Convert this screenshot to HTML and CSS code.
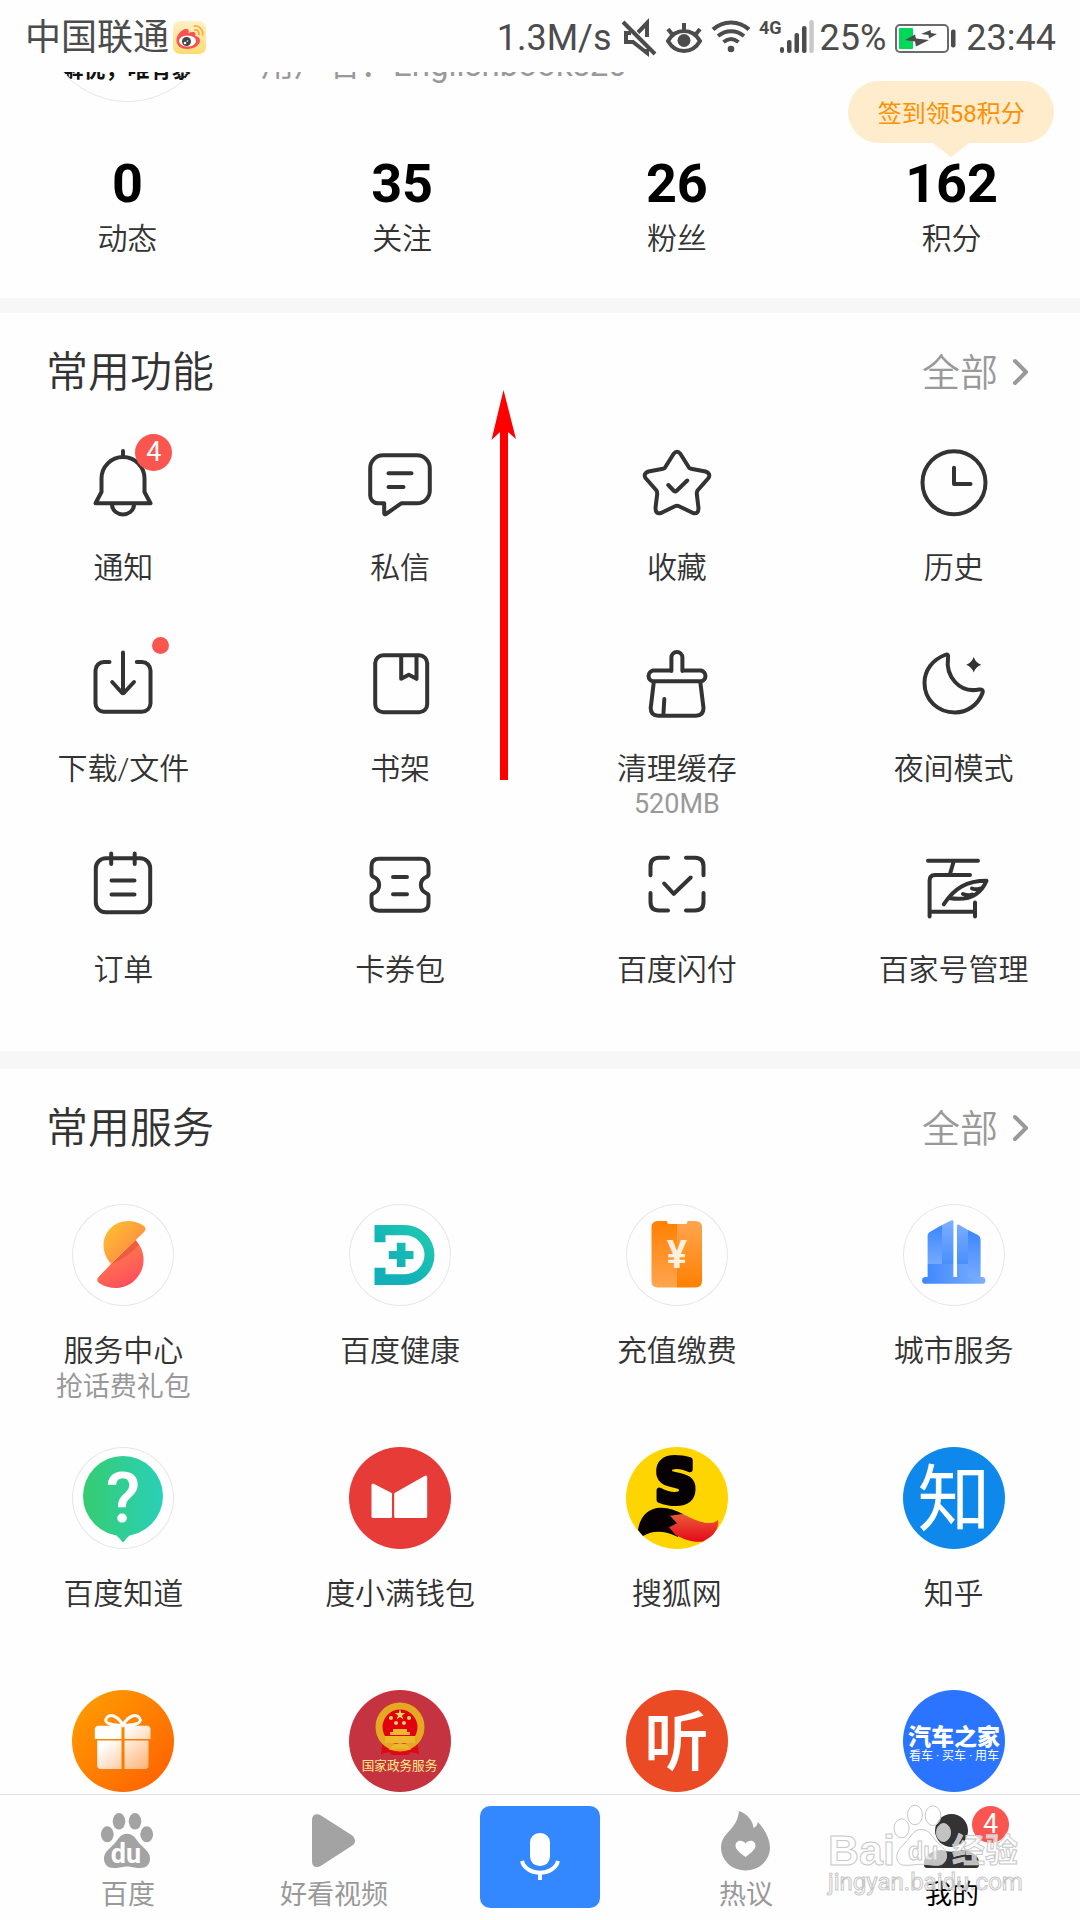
FILE: index.html
```html
<!DOCTYPE html>
<html lang="zh-CN">
<head>
<meta charset="utf-8">
<meta name="viewport" content="width=device-width">
<title>我的</title>
<link rel="stylesheet" href="styles.css">
</head>
<body>
<div class="app">
  <header class="status">
    <div class="status-side">
      <span>中国联通</span>
      <svg class="weibo" width="33" height="33" viewBox="0 0 33 33" aria-hidden="true">
        <defs><linearGradient id="wb" x1="0" y1="0" x2="0" y2="1"><stop offset="0" stop-color="#fff1c8"/><stop offset="1" stop-color="#ffdb70"/></linearGradient></defs>
        <rect width="33" height="33" rx="7" fill="url(#wb)"/>
        <path d="M3.500 20C3 14 9 8 13 8c3 0 3 2 2.500 4 3-1.500 7-1.500 7 1 0 1-.5 2-.5 2 3 .5 5 2 5 4.500C27 24 21 28 14.500 28S4 25 3.500 20z" fill="#fa5151"/>
        <ellipse cx="14.500" cy="20" rx="8.500" ry="5.500" fill="#fff"/>
        <circle cx="13.500" cy="20.500" r="4.500" fill="#444"/><circle cx="12" cy="22" r="1.300" fill="#fff"/><circle cx="14.500" cy="20" r=".8" fill="#fff"/>
        <path d="M21.500 5c5-.5 9 4 8 9M22 9c3-.3 4.500 2 4 4.500" fill="none" stroke="#ffab45" stroke-width="1.800" stroke-linecap="round"/>
      </svg>
    </div>
    <div class="status-side status-right">
      <span>1.3M/s</span>
      <svg width="43" height="40" viewBox="-3 0 43 40" class="line-dark" aria-hidden="true">
        <path d="M4 5 36 37M28 20V6l-9 9.500M12 16H7v9h7l14 11v-4"/>
      </svg>
      <svg width="42" height="40" viewBox="0 0 42 40" class="line-dark" aria-hidden="true">
        <path d="M5 24C9 17 15 14 21 14s12 3 16 10c-4 7-10 10-16 10S9 31 5 24zM21 6v7M5 12l4 5M37 12l-4 5"/>
        <circle cx="21" cy="23.500" r="6.500" fill="#4c4c4c" stroke="none"/>
      </svg>
      <svg width="44" height="40" viewBox="0 0 44 40" class="line-dark" aria-hidden="true">
        <path d="M4 12.500C14 3 30 3 40 12.500M9 19c8-6.500 18-6.500 26 0M14.500 25c5-4 10-4 15 0"/>
        <circle cx="22" cy="32" r="3.300" fill="#4c4c4c" stroke="none"/>
      </svg>
      <svg width="59" height="40" viewBox="-1 0 59 40" aria-hidden="true">
        <text x="1" y="17" font-size="18" font-weight="700" fill="#4c4c4c">4G</text>
        <g fill="#4c4c4c"><rect x="22" y="30" width="4" height="6" rx="2"/><rect x="29" y="23" width="4.500" height="13" rx="2"/><rect x="36.500" y="16" width="4.500" height="20" rx="2"/><rect x="44" y="9" width="4.500" height="27" rx="2"/></g>
        <rect x="51.300" y="3" width="4.500" height="33" rx="2" fill="#c9c9c9"/>
      </svg>
      <span>25%</span>
      <svg width="72" height="40" viewBox="2 0 72 40" aria-hidden="true">
        <rect x="8" y="8" width="52" height="27" rx="4" fill="#fff" stroke="#6a6a6a" stroke-width="2"/>
        <rect x="11" y="11" width="14" height="21" rx="1" fill="#00d858"/>
        <rect x="63" y="12.500" width="4.500" height="18" rx="2" fill="#4c4c4c"/>
        <path d="M17 23l10-5.500 1 4 13 1.500-13 6.500-1-5zM33 17l9.500-4 .5 3 6 1-8 4.500-.5-3.500z" fill="#4c4c4c"/>
      </svg>
      <span>23:44</span>
    </div>
  </header>

  <main class="content">
    <section class="profile">
      <div class="avatar"><span>解忧，唯有暴富</span></div>
      <p class="username">用户名：Englishbooks20</p>
    </section>

    <section class="stats">
      <a href="#"><b>0</b><span>动态</span></a>
      <a href="#"><b>35</b><span>关注</span></a>
      <a href="#"><b>26</b><span>粉丝</span></a>
      <a href="#"><b>162</b><span>积分</span><em class="bubble">签到领58积分</em></a>
    </section>

    <section class="panel functions">
      <div class="panel-head">
        <h2>常用功能</h2>
        <a href="#">全部<svg width="18" height="28" viewBox="0 0 18 28" aria-hidden="true"><path d="M3 3l11 11L3 25"/></svg></a>
      </div>
      <div class="grid">
        <a href="#" class="cell"><span class="icon">
          <svg viewBox="0 0 70 70"><path d="M35 3v5M13.500 44V30.500a21.500 21.500 0 0 1 43 0V44l6 11.300H7.500zM24 57c1 12.500 21 12.500 22 0"/></svg>
          <i class="badge">4</i></span><span class="label">通知</span></a>
        <a href="#" class="cell"><span class="icon">
          <svg viewBox="0 0 70 70"><path d="M18 7.300H52a12.800 12.800 0 0 1 12.800 12.800V42.500A12.800 12.800 0 0 1 52 55.300H36.200L21 66q-1.800 1-1.800-1v-9.700H13a7.800 7.800 0 0 1-7.800-7.800V20.100A12.800 12.800 0 0 1 18 7.300zM23.500 25.300h23M23.500 39h15"/></svg>
          </span><span class="label">私信</span></a>
        <a href="#" class="cell"><span class="icon">
          <svg viewBox="0 0 70 70"><path d="M31.500 6Q35 1.500 38.500 6L46.800 19.300Q47.600 20.500 49 20.700L63.500 23.500Q69 25.500 66.500 30L55.500 42.500Q54.700 44 54.800 46L56.500 60Q56.500 66.500 51 65L37 58.200Q35 57.300 33 58.200L19 65Q13.500 66.500 13.500 60L15.200 46Q15.300 44 14.500 42.500L3.500 30Q1 25.500 6.500 23.500L21 20.700Q22.400 20.500 23.200 19.300ZM26.300 37l5.700 6q1.200 1 2.400 0L45.200 32.500"/></svg>
          </span><span class="label">收藏</span></a>
        <a href="#" class="cell"><span class="icon">
          <svg viewBox="0 0 70 70"><circle cx="35" cy="34.700" r="31.500"/><path d="M35 19.700V36H51.500"/></svg>
          </span><span class="label">历史</span></a>

        <a href="#" class="cell"><span class="icon">
          <svg viewBox="0 0 70 70"><path d="M21.500 13H16a8.500 8.500 0 0 0-8.500 8.500v33A8.300 8.300 0 0 0 16 62.700H54a8.500 8.500 0 0 0 8.500-8.200v-33A8.500 8.500 0 0 0 54 13H48.800M35 3.500V44M24.200 33l9.500 10.500q1.300 1.200 2.600 0L46 33"/></svg>
          <i class="dot"></i></span><span class="label">下载/文件</span></a>
        <a href="#" class="cell"><span class="icon">
          <svg viewBox="0 0 70 70"><rect x="10.200" y="6.300" width="52" height="57" rx="8"/><path d="M36.200 7v22.800l7.600-4 7.700 4V7"/></svg>
          </span><span class="label">书架</span></a>
        <a href="#" class="cell"><span class="icon">
          <svg viewBox="0 0 70 70"><path d="M29.400 21.500H11A5.500 5.500 0 0 0 11 32.300H59A5.500 5.500 0 0 0 59 21.500H40.500M29.400 22V8.500a5.500 5.500 0 0 1 11 0V22M11.800 33L8.700 59q0 7.700 7.500 7.700H54q7.500 0 7.500-7.700L58.300 33M22.300 50l-.8 14"/></svg>
          </span><span class="label">清理缓存</span><small>520MB</small></a>
        <a href="#" class="cell"><span class="icon">
          <svg viewBox="0 0 70 70"><path d="M26 6Q30 4.500 29 9C26.500 27 40 44.500 60 40.500Q65 40 63.500 44C59 56 48 63.500 36 63.500C19 63.500 5.500 51 5.500 34C5.500 21 14 10.500 26 6Z"/><path d="M54.700 8q2 5.700 7.500 7.700-5.500 2-7.500 7.700-2-5.700-7.500-7.700 5.500-2 7.500-7.700z" fill="#333" stroke="none"/></svg>
          </span><span class="label">夜间模式</span></a>

        <a href="#" class="cell"><span class="icon">
          <svg viewBox="0 0 70 70"><rect x="7.800" y="8.300" width="54.400" height="54" rx="10"/><path d="M23.200 3.500V14M46.700 3.500V14M23.500 30.500H46.500M23.500 44.500H46.500"/></svg>
          </span><span class="label">订单</span></a>
        <a href="#" class="cell"><span class="icon">
          <svg viewBox="0 0 70 70"><path d="M14 8.700H56q7.500 0 7.500 7.500V24q0 2-2 2.800c-7.500 3-7.500 13.500 0 16.500q2 .8 2 2.700v7.300q0 7.400-7.500 7.400H14q-7.500 0-7.500-7.400V46q0-2 2-2.700c7.500-3 7.500-13.500 0-16.500q-2-.8-2-2.800V16.200q0-7.500 7.500-7.500zM28 27h14M28 44.300h14"/></svg>
          </span><span class="label">卡券包</span></a>
        <a href="#" class="cell"><span class="icon">
          <svg viewBox="0 0 70 70"><path d="M26 7.700H17q-8.500 0-8.500 8.500v9M44 7.700h9q8.500 0 8.500 8.500v9M26 60.500H17q-8.500 0-8.500-8.500V43M44 60.500h9q8.500 0 8.500-8.500V43M22.200 33.500l9.600 10.300L48.700 27.500"/></svg>
          </span><span class="label">百度闪付</span></a>
        <a href="#" class="cell"><span class="icon">
          <svg viewBox="0 0 70 70"><path d="M9 10.700H59M34.500 12L31 24M51 25H16q-5.400 0-5.400 5.500V66.500M10.600 61.700H56M56 52.500V66.500M24.800 54.300C35 38 48 30.700 67.500 30.700C61 46 48 51 30.500 48M44 44q5 2 9 .5M53 38.500q4 1.500 8 0"/></svg>
          </span><span class="label">百家号管理</span></a>
      </div>
    </section>

    <section class="panel services">
      <div class="panel-head">
        <h2>常用服务</h2>
        <a href="#">全部<svg width="18" height="28" viewBox="0 0 18 28" aria-hidden="true"><path d="M3 3l11 11L3 25"/></svg></a>
      </div>
      <div class="grid">
        <a href="#" class="cell"><svg class="logo ring" viewBox="0 0 102 102">
          <defs>
            <linearGradient id="sa" x1="0" y1="0" x2="1" y2="1"><stop offset="0" stop-color="#ffc62e"/><stop offset="1" stop-color="#ff7a4a"/></linearGradient>
            <linearGradient id="sb" x1=".2" y1="0" x2=".7" y2="1"><stop offset="0" stop-color="#ff8a45"/><stop offset="1" stop-color="#ff4a5e"/></linearGradient>
          </defs>
          <path d="M63.500 36C75 48 74 66 62 77C52 86 38 86 27 79Q23.500 76 27 72.500L39 60Z" fill="url(#sb)"/>
          <path d="M63.500 36L39 60q16-6 28-19z" fill="#d9402f" opacity=".45"/>
          <path d="M39 60C27 46 30 28 44 20C54 15 64 17 72 22Q75 25 72 28Z" fill="url(#sa)"/></svg>
          <span class="label">服务中心</span><small>抢话费礼包</small></a>
        <a href="#" class="cell"><svg class="logo ring" viewBox="0 0 102 102">
          <defs><linearGradient id="dh" x1="0" y1="1" x2="1" y2="0"><stop offset=".3" stop-color="#12b0b8"/><stop offset="1" stop-color="#22cdb0"/></linearGradient></defs>
          <path d="M25.500 21H55.500a30 30 0 0 1 0 60H25.500V63.700H36.500V70.300H56a19.500 19.500 0 0 0 0-39H36.500V38.300H25.500ZM47.800 38.700h8.700V47h8v8h-8v8h-8.700v-8h-8v-8h8z" fill="url(#dh)"/></svg>
          <span class="label">百度健康</span></a>
        <a href="#" class="cell"><svg class="logo ring" viewBox="0 0 102 102">
          <defs><linearGradient id="ra" x1="0" y1="0" x2="0" y2="1"><stop offset="0" stop-color="#ff8000"/><stop offset="1" stop-color="#ffa550"/></linearGradient>
          <linearGradient id="rb" x1="0" y1="0" x2="0" y2="1"><stop offset="0" stop-color="#ffa550"/><stop offset="1" stop-color="#ff8000"/></linearGradient></defs>
          <path d="M51 20H43q-2 0-2-3H32q-6.500 0-6.500 6.500v53.500q0 6.500 6.500 6.500H51z" fill="url(#ra)"/>
          <path d="M51 20h8.500q2 0 2-3H69.500q6.500 0 6.500 6.500v53.500q0 6.500-6.500 6.500H51z" fill="url(#rb)"/>
          <text x="51" y="64" font-size="38" font-weight="700" text-anchor="middle" fill="#fff0df">¥</text></svg>
          <span class="label">充值缴费</span></a>
        <a href="#" class="cell"><svg class="logo ring" viewBox="0 0 102 102">
          <defs><linearGradient id="ca" x1="0" y1="0" x2="0" y2="1"><stop offset="0" stop-color="#3c86ff"/><stop offset="1" stop-color="#74aaff"/></linearGradient>
          <linearGradient id="cb" x1="0" y1="0" x2="0" y2="1"><stop offset="0" stop-color="#7db0ff"/><stop offset="1" stop-color="#4a8eff"/></linearGradient>
          <linearGradient id="cc" x1="0" y1="0" x2="1" y2="0"><stop offset="0" stop-color="#3c86ff"/><stop offset="1" stop-color="#7db0ff"/></linearGradient></defs>
          <path d="M24.600 60V32q0-3 3-4.500L39 21v39z" fill="url(#ca)"/><path d="M39 60V21l9-4.500q2.400-1 2.400 1V60zM54 60V22q0-2 2-1.200L65 26v34z" fill="url(#cb)"/>
          <path d="M65 73V26l10 5q2.600 1.500 2.600 4.500V73z" fill="url(#ca)"/>
          <path d="M24.600 60H50.400V73H54V60H65V73H79a3.400 3.400 0 0 1 0 6.800H22.500a3.400 3.400 0 0 1 0-6.800h2.100z" fill="url(#cc)"/></svg>
          <span class="label">城市服务</span></a>

        <a href="#" class="cell"><svg class="logo ring" viewBox="0 0 102 102">
          <defs><linearGradient id="zd"><stop offset="0" stop-color="#35cc70"/><stop offset="1" stop-color="#2ad0b8"/></linearGradient></defs>
          <circle cx="51" cy="49" r="40" fill="url(#zd)"/><path d="M42 87q3 1 8 7.500 1 1.200 2 0 5-6.500 8-7.500z" fill="#2fce94"/>
          <text x="51" y="75" font-size="71" font-weight="500" text-anchor="middle" fill="#fff">?</text></svg>
          <span class="label">百度知道</span></a>
        <a href="#" class="cell"><svg class="logo" viewBox="0 0 102 102">
          <circle cx="51" cy="51" r="51" fill="#e73b38"/>
          <path d="M24 38l17.500 9V69.500H24zM46.700 47l30-17V69.500h-30z" fill="#fff" stroke="#fff" stroke-width="3" stroke-linejoin="round"/></svg>
          <span class="label">度小满钱包</span></a>
        <a href="#" class="cell"><svg class="logo" viewBox="0 0 102 102">
          <defs><linearGradient id="sh" x1="0" y1="0" x2="0" y2="1"><stop offset="0" stop-color="#ea5b38"/><stop offset="1" stop-color="#e5091a"/></linearGradient></defs>
          <circle cx="51" cy="51" r="51" fill="#ffd500"/>
          <text x="50" y="55" class="sohu" text-anchor="middle">S</text>
          <path d="M12 83C14 68 24 60 36 60.700Q46 61 57 67L52 90Q32 80 17 89z" fill="#060003"/>
          <path d="M57 67C70 74 84 80 92 73q1.500 9-7 16.500l-8 5C66 96 58 92 49.500 88L43 80.300l8-4-7-7.500z" fill="url(#sh)"/></svg>
          <span class="label">搜狐网</span></a>
        <a href="#" class="cell"><svg class="logo" viewBox="0 0 102 102">
          <circle cx="51" cy="51" r="51" fill="#0f88eb"/>
          <text x="51" y="78" font-size="73" text-anchor="middle" fill="#fff">知</text></svg>
          <span class="label">知乎</span></a>

        <a href="#" class="cell"><svg class="logo" viewBox="0 0 102 102">
          <defs><linearGradient id="ga" x1="0" y1="0" x2="1" y2="1"><stop offset=".1" stop-color="#ff9a00"/><stop offset=".9" stop-color="#ff6400"/></linearGradient>
          <linearGradient id="gb" x1="0" y1="0" x2="1" y2="1"><stop offset=".3" stop-color="#fff"/><stop offset="1" stop-color="#ffb070"/></linearGradient></defs>
          <circle cx="51" cy="51" r="51" fill="url(#ga)"/>
          <path d="M25 35.700H49.500V49H22.800V38zM52.500 35.700H76.500l2 2.300V49h-26zM25.200 50.500H49.500V79H27.500l-2.300-2zM52.500 50.500h24V77l-2 2h-22z" fill="url(#gb)"/>
          <path d="M51 35C46 26 38 23 34.500 28S40 36 51 35C62 36 71 33 67.500 28S56 26 51 35z" fill="none" stroke="#fff" stroke-width="3"/></svg></a>
        <a href="#" class="cell"><svg class="logo" viewBox="0 0 102 102">
          <circle cx="51" cy="51" r="51" fill="#c53340"/>
          <path d="M34 49L32 64l8-2 3 3h16l3-3 8 2-2-15z" fill="#dd0a16"/>
          <circle cx="51" cy="37" r="21" fill="#e0000f" stroke="#e5a823" stroke-width="7"/>
          <path d="M36 46h30v7H36zM41 42h20v3H41zM44 39h14v3H44zM43 56q8-6 16 0l3 4q-11-3-22 0z" fill="#efb730"/>
          <path d="M51 19l1.300 4h4l-3.300 2.400 1.300 4-3.300-2.500-3.300 2.500 1.300-4-3.300-2.400h4z" fill="#f7d35a"/>
          <g fill="#f7d35a"><circle cx="42" cy="28" r="2"/><circle cx="60" cy="28" r="2"/><circle cx="47" cy="33" r="2"/><circle cx="55" cy="33" r="2"/></g>
          <text x="50.500" y="80" font-size="12.600" text-anchor="middle" fill="#fdec82">国家政务服务</text></svg></a>
        <a href="#" class="cell"><svg class="logo" viewBox="0 0 102 102">
          <circle cx="51" cy="51" r="51" fill="#eb4b24"/>
          <text x="50.500" y="75" font-size="65" font-weight="500" text-anchor="middle" fill="#fff">听</text></svg></a>
        <a href="#" class="cell"><svg class="logo" viewBox="0 0 102 102">
          <circle cx="51" cy="51" r="51" fill="#2a74ff"/>
          <text x="51" y="54.500" font-size="23" font-weight="900" text-anchor="middle" fill="#fff">汽车之家</text>
          <text x="51" y="69.500" font-size="12" text-anchor="middle" fill="#fff">看车 · 买车 · 用车</text></svg></a>
      </div>
    </section>
  </main>

  <nav class="tabs">
    <a href="#" class="tab"><span class="tab-icon"><svg viewBox="0 0 56 56">
      <g fill="#a3a3a3"><ellipse cx="7.300" cy="22.300" rx="6.400" ry="8"/><ellipse cx="19" cy="9.300" rx="6.300" ry="8.300"/><ellipse cx="35" cy="9.300" rx="6.300" ry="8.300"/><ellipse cx="46.700" cy="22.300" rx="6.400" ry="8"/>
      <path d="M27 21.700C34 21.700 36 28 41 33C46 38 50 41 50 46.500C50 53 46 56 40 56C34 56 31 54.500 27 54.500S20 56 14 56C8 56 4 53 4 46.500C4 41 8 38 13 33C18 28 20 21.700 27 21.700Z"/></g>
      <text x="26" y="50.500" font-size="27" font-weight="700" text-anchor="middle" fill="#fff">du</text></svg></span>百度</a>
    <a href="#" class="tab"><span class="tab-icon"><svg viewBox="0 0 56 56"><path d="M6 8Q6 2.300 11 2.300q2 0 4 1.300L45.500 23Q49 25.500 49 28.700T45.500 34L15 53.700Q13 55 11 55 6 55 6 49z" fill="#a3a3a3"/></svg></span>好看视频</a>
    <button type="button" class="mic" aria-label="语音搜索"><svg width="44" height="52" viewBox="0 0 44 52"><rect x="12" y="2" width="20" height="33" rx="9.500" fill="#fff"/><path d="M4 30C8 45.500 36 45.500 40 30M22 41v8" fill="none" stroke="#fff" stroke-width="4"/></svg></button>
    <a href="#" class="tab"><span class="tab-icon"><svg viewBox="0 0 56 56"><path d="M21-1C29 2 35 8 35.500 16q3.500-1.500 4.500-6C46 17 52 26 52 36a24.500 22.500 0 0 1-49 0C3 20 19 19 21-1z" fill="#a3a3a3"/><path d="M27.500 45C22 41 17.500 37.500 17.500 33.500c0-5.500 7-6.500 10-2 3-4.500 10-3.500 10 2C37.500 37.500 33 41 27.500 45z" fill="#fff"/></svg></span>热议</a>
    <a href="#" class="tab current"><span class="tab-icon"><svg viewBox="0 0 56 56"><circle cx="27.500" cy="18.500" r="16.500" fill="#333"/><path d="M0 50C0 43 9 38 18 38q9 3.500 19 0c9 0 18 5 18 12v3q0 3-3 3H3q-3 0-3-3z" fill="#333"/></svg><i class="badge">4</i></span>我的</a>
    <svg class="watermark" width="204" height="106" viewBox="0 0 204 106" aria-hidden="true">
      <text x="6" y="65" class="wm-latin" font-size="43">Bai</text>
      <ellipse cx="79.600" cy="28.300" rx="7.500" ry="9.500"/><ellipse cx="93" cy="15" rx="7.500" ry="9.800"/><ellipse cx="111" cy="15.700" rx="7.800" ry="9.800"/><ellipse cx="121.500" cy="32.500" rx="7" ry="9"/>
      <path d="M99 29.500C108 29.500 110 37 116 43C123 49 126 53 124 59C122 65 117 66 110 65C103 64 98 64 90 65C81 66 76 65 75 59C74 53 77 49 83 43C89 37 91 29.500 99 29.500Z"/>
      <text x="86" y="60" class="wm-latin" font-size="25">du</text>
      <text x="130" y="62" font-size="33" font-weight="700">经验</text>
      <text x="6" y="90" font-size="24">jingyan.baidu.com</text>
    </svg>
  </nav>

  <svg class="swipe-arrow" width="26" height="390" viewBox="0 0 26 390" aria-hidden="true"><path d="M12.500 0L25 49l-8-7V390H9V42l-8.500 8z" fill="#f00"/></svg>
</div>
</body>
</html>
```

FILE: styles.css
```css
* {
  box-sizing: border-box;
}

body {
  margin: 0;
  background: #fefefe;
  color: #333;
  font-family: Roboto, "Noto Sans CJK SC", sans-serif;
}

a {
  color: inherit;
  text-decoration: none;
}

svg {
  display: block;
  overflow: visible;
}

i,
em {
  font-style: normal;
}

.app {
  position: relative;
  display: flex;
  flex-direction: column;
  height: 100vh;
  overflow: hidden;
}

/* Status bar */
.status {
  display: flex;
  flex: none;
  justify-content: space-between;
  height: 72px;
  padding: 16px 24px 14px 25px;
  color: #4c4c4c;
  font-size: 36px;
  line-height: 40px;
}

.status-side {
  display: flex;
  align-items: center;
  gap: 4px;
}

.status-side span {
  padding-top: 2px;
}

.line-dark {
  fill: none;
  stroke: #4c4c4c;
  stroke-width: 4;
}

/* Scrolled content */
.content {
  flex: 1;
  min-height: 0;
  overflow: hidden;
}

.profile {
  display: flex;
  align-items: flex-end;
  gap: 48px;
  height: 30px;
  padding-left: 42px;
  overflow: hidden;
}

.avatar {
  display: flex;
  flex: none;
  align-items: flex-end;
  justify-content: center;
  width: 171px;
  height: 171px;
  padding: 0 0 17px 22px;
  border: 1px solid #e6e6e6;
  border-radius: 50%;
  overflow: hidden;
  color: #111;
  font-size: 22px;
  font-weight: 700;
  line-height: 28px;
  white-space: nowrap;
}

.username {
  margin: 0 0 17px;
  color: #999;
  font-size: 33px;
  line-height: 40px;
}

.stats {
  display: grid;
  grid-template-columns: repeat(4, 1fr);
  column-gap: 20px;
  padding: 52px 1px 41px 0;
}

.stats a {
  position: relative;
  display: flex;
  flex-direction: column;
  align-items: center;
}

.stats b {
  color: #000;
  font-size: 54px;
  line-height: 60px;
}

.stats span {
  margin-top: 7px;
  font-size: 30px;
  font-weight: 350;
  line-height: 36px;
}

.bubble {
  position: absolute;
  bottom: 114px;
  left: 24px;
  width: 206px;
  padding-top: 4px;
  border-radius: 31px;
  background: #feeccc;
  color: #ff9000;
  font-size: 24px;
  line-height: 58px;
  text-align: center;
}

.bubble::after {
  content: "";
  position: absolute;
  top: 100%;
  left: 50%;
  margin-left: -18px;
  border: 18px solid transparent;
  border-top: 14px solid #feeccc;
  border-bottom: 0;
}

/* Panels */
.panel {
  padding: 30px 0 32px;
  border-top: 18px solid #f7f7f7;
}

.functions {
  border-top-width: 15px;
}

.panel-head {
  display: flex;
  align-items: center;
  justify-content: space-between;
  padding: 0 50px 0 46px;
  line-height: 60px;
}

.panel-head h2 {
  margin: 0;
  font-size: 42px;
  font-weight: 350;
}

.panel-head a {
  display: flex;
  align-items: center;
  gap: 14px;
  color: #999;
  font-size: 38px;
  font-weight: 350;
}

.panel-head svg {
  margin-bottom: 3px;
}

.panel-head path {
  fill: none;
  stroke: #999;
  stroke-width: 4;
  stroke-linecap: round;
  stroke-linejoin: round;
}

.grid {
  display: grid;
  grid-template-columns: repeat(4, 1fr);
  column-gap: 30px;
  padding: 45px 3px 0 0;
}

.functions .grid {
  grid-auto-rows: 169px;
  row-gap: 32px;
}

.services .grid {
  grid-auto-rows: 199px;
  row-gap: 44px;
}

.cell {
  display: flex;
  flex-direction: column;
  align-items: center;
  white-space: nowrap;
}

.label {
  font-size: 30px;
  font-weight: 350;
  line-height: 36px;
}

.cell small {
  color: #999;
  font-size: 27px;
  line-height: 34px;
}

.services small {
  line-height: 36px;
}

.icon {
  position: relative;
  width: 70px;
  height: 70px;
  margin-bottom: 32px;
}

.icon svg {
  fill: none;
  stroke: #333;
  stroke-width: 4;
  stroke-linecap: round;
  stroke-linejoin: round;
}

.logo {
  flex: none;
  width: 102px;
  height: 102px;
  margin-bottom: 27px;
}

.ring {
  border-radius: 50%;
  box-shadow: inset 0 0 0 1px #e6e6e6;
}

.sohu {
  fill: #060003;
  stroke: #060003;
  stroke-width: 6;
  stroke-linejoin: round;
  font-family: "DejaVu Sans", sans-serif;
  font-size: 58px;
  font-weight: 700;
}

.badge {
  position: absolute;
  top: -14px;
  left: 47px;
  width: 37px;
  height: 37px;
  border-radius: 50%;
  background: #fb5550;
  color: #fff;
  font-size: 27px;
  line-height: 37px;
  text-align: center;
}

.dot {
  position: absolute;
  top: -12px;
  left: 64px;
  width: 17px;
  height: 17px;
  border-radius: 50%;
  background: #fb5550;
}

/* Bottom tabs */
.tabs {
  position: relative;
  display: grid;
  flex: none;
  grid-template-columns: repeat(5, 1fr);
  padding: 0 25px;
  border-top: 1px solid #e2e2e2;
  background: #fefefe;
}

.tab {
  display: flex;
  flex-direction: column;
  align-items: center;
  gap: 10px;
  padding: 17px 0 8px;
  color: #999;
  font-size: 27px;
  line-height: 34px;
}

.current {
  color: #000;
}

.tab-icon {
  position: relative;
  width: 56px;
  height: 56px;
}

.tab .badge {
  top: -6px;
  left: 48px;
}

.mic {
  display: flex;
  align-items: center;
  justify-content: center;
  justify-self: center;
  width: 120px;
  height: 102px;
  margin-top: 11px;
  padding: 0;
  border: 0;
  border-radius: 10px;
  background: #3388ff;
}

.watermark {
  position: absolute;
  right: 54px;
  bottom: 14px;
  fill: rgba(255, 255, 255, 0.7);
  stroke: #c8c8c8;
  stroke-width: 1;
  pointer-events: none;
}

.wm-latin {
  font-family: "Liberation Sans", sans-serif;
  font-weight: 700;
}

.swipe-arrow {
  position: absolute;
  top: 390px;
  left: 491px;
}
```
